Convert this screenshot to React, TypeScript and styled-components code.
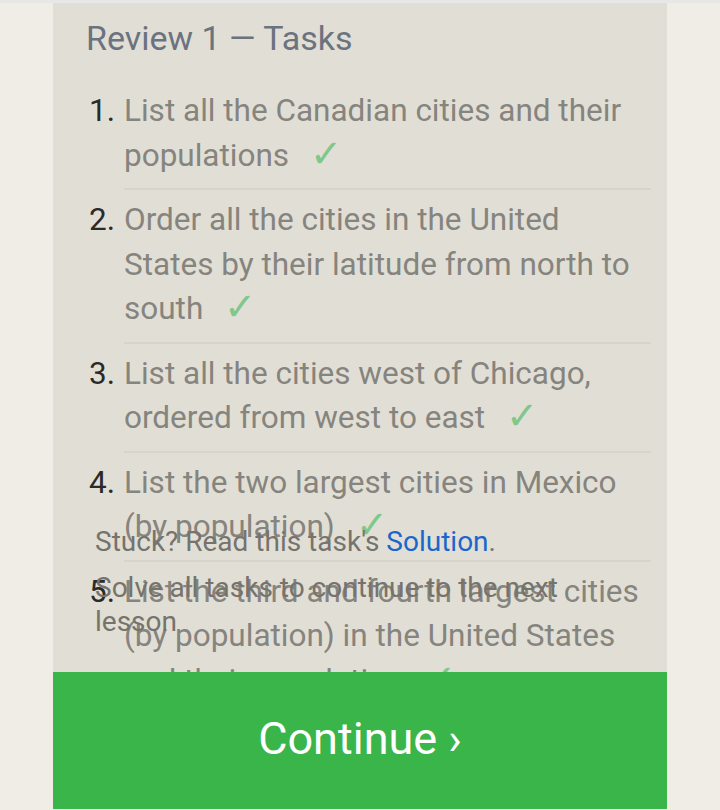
import React from "react";
import styled, { createGlobalStyle } from "styled-components";

const GlobalStyle = createGlobalStyle`
  html, body {
    margin: 0;
    padding: 0;
    background: #efede6;
  }
  * {
    box-sizing: border-box;
  }
`;

const Page = styled.div`
  width: 720px;
  height: 810px;
  display: flex;
  justify-content: center;
  align-items: flex-start;
  border-top: 3px solid #e7e7e5;
  background: #efede6;
  font-family: Roboto, "Liberation Sans", sans-serif;
`;

const Panel = styled.main`
  position: relative;
  width: 614px;
  height: 806px;
  background: #e1dfd5;
  overflow: hidden;
`;

const Content = styled.section`
  padding: 14px 16px 0 33px;
`;

const Title = styled.h1`
  margin: 0 0 22px;
  font-size: 34px;
  font-weight: 400;
  line-height: 42px;
  color: #6b7280;
`;

const TaskList = styled.ol`
  list-style: none;
  margin: 0;
  padding: 0 0 0 3px;
`;

const Task = styled.li`
  display: grid;
  grid-template-columns: 35px 1fr;
  font-size: 31.5px;
  line-height: 44.5px;
`;

const Number = styled.span`
  color: #2a2a2a;
  padding-top: 8px;
`;

const TaskText = styled.div`
  color: #86847e;
  padding: 8px 0 10px;
  border-bottom: 2px solid #d7d5cb;
`;

const Check = styled.span`
  display: inline-block;
  vertical-align: top;
  height: 44.5px;
  line-height: 44.5px;
  margin-left: 13px;
  color: #7fc78b;
  font-family: "DejaVu Sans", sans-serif;
  transform: scale(1.22);
  transform-origin: left 70%;
`;

const Footer = styled.div`
  position: absolute;
  left: 0;
  right: 0;
  bottom: 0;
  display: flex;
  flex-direction: column;
`;

const Help = styled.div`
  padding: 0 42px 33px;
  font-size: 28px;
  line-height: 34px;
  color: #76736d;
`;

const HelpLine = styled.p<{ gap?: number }>`
  margin: 0 0 ${(p) => p.gap ?? 0}px;
`;

const Link = styled.a`
  color: #1a66cc;
  text-decoration: none;
`;

const ContinueButton = styled.button`
  height: 137px;
  border: none;
  padding: 0 0 4px;
  background: #3ab54a;
  color: #ffffff;
  font-family: Roboto, "Liberation Sans", sans-serif;
  font-size: 45px;
  cursor: pointer;
`;

const tasks = [
  "List all the Canadian cities and their populations",
  "Order all the cities in the United States by their latitude from north to south",
  "List all the cities west of Chicago, ordered from west to east",
  "List the two largest cities in Mexico (by population)",
  "List the third and fourth largest cities (by population) in the United States and their population",
];

export default function App() {
  return (
    <>
      <GlobalStyle />
      <Page>
        <Panel>
          <Content>
            <Title>Review 1 — Tasks</Title>
            <TaskList>
              {tasks.map((t, i) => (
                <Task key={i}>
                  <Number>{i + 1}.</Number>
                  <TaskText>
                    {t} <Check>✓</Check>
                  </TaskText>
                </Task>
              ))}
            </TaskList>
          </Content>
          <Footer>
            <Help>
              <HelpLine gap={12}>
                Stuck? Read this task's <Link>Solution</Link>.
              </HelpLine>
              <HelpLine>Solve all tasks to continue to the next lesson</HelpLine>
            </Help>
            <ContinueButton>Continue ›</ContinueButton>
          </Footer>
        </Panel>
      </Page>
    </>
  );
}
